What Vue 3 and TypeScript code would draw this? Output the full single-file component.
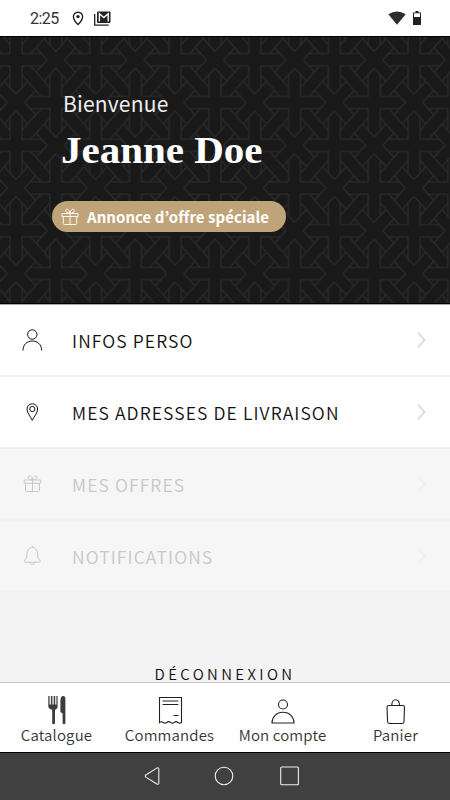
<script setup lang="ts">
interface MenuItem {
  label: string
  icon: 'user' | 'pin' | 'gift' | 'bell'
  disabled: boolean
}

interface Tab {
  label: string
  icon: 'cutlery' | 'receipt' | 'account' | 'bag'
}

const menu: MenuItem[] = [
  { label: 'INFOS PERSO', icon: 'user', disabled: false },
  { label: 'MES ADRESSES DE LIVRAISON', icon: 'pin', disabled: false },
  { label: 'MES OFFRES', icon: 'gift', disabled: true },
  { label: 'NOTIFICATIONS', icon: 'bell', disabled: true },
]

const tabs: Tab[] = [
  { label: 'Catalogue', icon: 'cutlery' },
  { label: 'Commandes', icon: 'receipt' },
  { label: 'Mon compte', icon: 'account' },
  { label: 'Panier', icon: 'bag' },
]

// The four mirrored quadrants of one pattern tile.
const quadrants: string[] = ['', 'translate(79.6 0) scale(-1 1)', 'translate(0 85.5) scale(1 -1)', 'translate(79.6 85.5) scale(-1 -1)']
</script>

<template>
  <div class="screen">
    <header class="status">
      <span class="time">2:25</span>
      <svg class="status-pin" viewBox="0 0 12 15" width="12" height="15">
        <path d="M6 1.2C3.2 1.2 1.4 3.2 1.4 5.7 1.4 9 6 13.6 6 13.6S10.600 9 10.600 5.700C10.600 3.200 8.800 1.200 6 1.200Z" fill="none" stroke="#222" stroke-width="1.4" />
        <circle cx="6" cy="5.600" r="1.700" fill="#222" />
      </svg>
      <svg class="status-mail" viewBox="0 0 17 15" width="17" height="15">
        <path d="M.7 3v11.200h14" fill="none" stroke="#222" stroke-width="1.300" />
        <rect x="3" y="0.500" width="13.500" height="11.500" rx="1" fill="#222" />
        <path d="M5.400 10.500V2.800l4.400 3.800 4.400-3.800v7.700" fill="none" stroke="#fff" stroke-width="1.400" />
      </svg>
      <span class="grow"></span>
      <svg class="wifi" viewBox="0 0 18 14" width="18" height="14">
        <path d="M.3 3.200Q9-2.200 17.700 3.200L9 13.800Z" fill="#2d2d2d" />
      </svg>
      <svg class="battery" viewBox="0 0 8 14" width="8" height="14">
        <path d="M2.500 0h3v1.500H8V14H0V1.500h2.500Z" fill="#222" />
        <rect x="1" y="2.300" width="6" height="3.700" fill="#fff" />
      </svg>
    </header>

    <section class="hero">
      <svg class="weave" width="450" height="267">
        <defs>
          <g id="quadrant" fill="none" stroke="#2a2a2a" stroke-width="1.300">
            <path d="M0 34.200L6 28V6H25.600L31.300 0M8.500 42.750L14.100 36.750H33.800V14.700L39.800 8.500" />
            <path d="M6 15L25.300 36.750M14.500 6L33.800 27.750" />
            <path d="M25.600 6L19.900 12.400M6 28L11.800 21.200M14.100 36.750L19.900 30.300M33.800 14.700L28 21.500" />
          </g>
          <pattern id="weave" x="16" y="22.800" width="79.600" height="85.500" patternUnits="userSpaceOnUse">
            <use v-for="q in quadrants" :key="q" href="#quadrant" :transform="q" />
          </pattern>
        </defs>
        <rect width="450" height="267" fill="#191919" />
        <rect width="450" height="267" fill="url(#weave)" />
      </svg>
      <div class="hero-content">
        <p class="welcome">Bienvenue</p>
        <h1 class="name">Jeanne Doe</h1>
        <div class="offer">
          <svg viewBox="0 0 18 18" width="18" height="18" fill="none" stroke="#fff7e8" stroke-width="1">
            <path d="M1 5.500h16v3H1ZM2.300 8.500V15.500q0 1 1 1H14.700q1 0 1-1V8.500M9 5.500v11M9 5.300C7 5.300 4.500 4.300 4.500 2.600 4.500.6 8 .2 9 5.300M9 5.300C11 5.300 13.500 4.300 13.500 2.600 13.500.6 10 .2 9 5.300" />
          </svg>
          <span>Annonce d’offre spéciale</span>
        </div>
      </div>
    </section>

    <nav class="menu">
      <a v-for="item in menu" :key="item.label" class="item" :class="{ disabled: item.disabled }">
        <svg class="item-icon" viewBox="0 0 22 24" width="22" height="24" fill="none" stroke="currentColor">
          <g v-if="item.icon === 'user'">
            <circle cx="11.300" cy="6.500" r="4.700" />
            <path d="M2 22.500C2 16.500 6 13 11.300 13S20.600 16.500 20.600 22.500" />
          </g>
          <g v-else-if="item.icon === 'pin'">
            <path d="M11.300 20.300C9.800 17 6 13 6 9 6 6 8.300 3.800 11.300 3.800S16.600 6 16.600 9C16.600 13 12.800 17 11.300 20.300Z" />
            <circle cx="11.300" cy="9" r="2.600" />
          </g>
          <g v-else-if="item.icon === 'gift'">
            <path d="M3.300 8h16.400v3.200H3.300ZM4.500 11.200v7q0 1.300 1.300 1.300h11.400q1.300 0 1.300-1.300v-7M11.500 8v11.500M11.500 7.800C9.500 7.800 7 7 7 5.300 7 3.300 10.500 2.800 11.500 7.800M11.500 7.800C13.500 7.800 16 7 16 5.300 16 3.300 12.500 2.800 11.500 7.800" />
          </g>
          <g v-else>
            <path d="M11.300 2V3C9.800 3.500 5.800 5.500 5.800 10V13C5.800 15 3.300 15.500 3.300 17.300 3.300 18 3.700 18.200 4.300 18.200H18.300C18.900 18.200 19.300 18 19.300 17.300 19.300 15.500 16.800 15 16.800 13V10C16.800 5.500 12.800 3.500 11.300 3M9 18.200C9 21.200 13.600 21.200 13.600 18.200" />
          </g>
        </svg>
        <span class="item-label">{{ item.label }}</span>
        <svg class="chevron" viewBox="0 0 9 16" width="9" height="16">
          <path d="M1 .7L7.600 8 1 15.300" fill="none" stroke="currentColor" stroke-width="1.200" />
        </svg>
      </a>
    </nav>

    <div class="logout">DÉCONNEXION</div>

    <nav class="tabs">
      <a v-for="tab in tabs" :key="tab.label" class="tab">
        <svg viewBox="0 0 26 30" width="26" height="30" fill="none" stroke="#222" stroke-width="1.100">
          <g v-if="tab.icon === 'cutlery'" fill="#3c3c3c" stroke="none">
            <path d="M4.300 1h1.300v8.500h1.300V1h1.500v8.500h1.300V1h1.500v8.500h1.200V1h1.200v10.500c0 1.800-1 2.700-2.600 3.200V28q0 1.200-1.400 1.200T8.200 28V14.700c-2.300-.5-3.900-1.600-3.900-3.700Z" />
            <path d="M21.400 28q0 1.200-1.400 1.200T18.600 28V18.500L16.400 17V6q0-5 2.800-5 2.200 0 2.200 3Z" />
          </g>
          <g v-else-if="tab.icon === 'receipt'">
            <path d="M2.500 27.500V2.500H24.500V27.500q-1.800 1.300-3.600 0q-1.800-1.800-3.700 0q-1.800 1.300-3.700 0q-1.800-1.800-3.700 0q-1.800 1.300-3.600 0q-1.900-1.600-3.700 0Z" />
            <path d="M5.500 6h15.800M5.500 9.500h15.800M16.500 20.500h5" />
          </g>
          <g v-else-if="tab.icon === 'account'">
            <circle cx="13" cy="9.500" r="4.500" />
            <path d="M2 28C2 22 6.500 17.200 13 17.200S24 22 24 28Z" />
          </g>
          <g v-else>
            <path d="M5.700 10.500H19.800Q21.500 10.500 21.500 12L21 26.700Q20.900 28.500 19.100 28.500H6.500Q4.700 28.500 4.600 26.700L4 12Q4 10.500 5.700 10.500Z" />
            <path d="M8.800 10.500C8.800 2.800 16.500 2.800 16.500 10.500" />
          </g>
        </svg>
        <span>{{ tab.label }}</span>
      </a>
    </nav>

    <footer class="system">
      <svg class="back" viewBox="0 0 20 20" width="20" height="20">
        <path d="M14.800 3.300V16.700Q14.800 19 12.800 17.900L2.200 11.400Q.2 10 2.200 8.700L12.800 2.100Q14.800 1 14.800 3.300Z" />
      </svg>
      <svg viewBox="0 0 20 20" width="20" height="20"><circle cx="10" cy="10" r="8.800" /></svg>
      <svg viewBox="0 0 20 20" width="20" height="20"><rect x="0.700" y="1" width="17.700" height="17.700" rx="1" /></svg>
    </footer>
  </div>
</template>

<style>
body {
  margin: 0;
}
</style>

<style scoped>
.screen {
  width: 450px;
  height: 800px;
  display: flex;
  flex-direction: column;
  overflow: hidden;
  background: #f3f3f3;
  color: #111;
  font-family: "Noto Sans CJK JP", "Noto Sans", sans-serif;
}

.status {
  box-sizing: border-box;
  height: 36px;
  flex: none;
  display: flex;
  align-items: center;
  padding: 0 29px 0 30px;
  background: #fff;
}
.time {
  width: 42px;
  padding-top: 1px;
  font: 400 16px/35px Roboto, sans-serif;
  letter-spacing: -0.500px;
  color: #333;
}
.status-pin {
  margin-right: 10px;
}
.grow {
  flex: 1;
}
.wifi {
  margin-right: 7px;
}

.hero {
  box-sizing: border-box;
  height: 268px;
  flex: none;
  display: grid;
  border-top: 1px solid #000;
  border-bottom: 1px solid #000;
  overflow: hidden;
}
.weave,
.hero-content {
  grid-area: 1 / 1;
}
.hero-content {
  display: flex;
  flex-direction: column;
  align-items: flex-start;
  padding: 49px 0 0 52px;
  color: #fff;
}
.welcome {
  margin: 0 0 0 11px;
  font-size: 21px;
  line-height: 34px;
  letter-spacing: 0.200px;
  color: #eee;
}
.name {
  margin: 6px 0 0 9px;
  font: 700 38.500px/48px "Liberation Serif", serif;
  transform: scaleX(1.065);
  transform-origin: left;
}
.offer {
  box-sizing: border-box;
  width: 234px;
  height: 31px;
  margin-top: 27px;
  display: flex;
  align-items: center;
  gap: 8px;
  padding-left: 9px;
  border-radius: 15.500px;
  background: #c0a479;
  font-size: 15px;
  font-weight: 700;
  line-height: 31px;
  letter-spacing: 0.050px;
  white-space: nowrap;
}

.menu {
  border-top: 1px solid #aaa;
}
.item {
  box-sizing: border-box;
  height: 72px;
  display: flex;
  align-items: center;
  padding: 0 24px 0 21px;
  background: #fff;
  border-bottom: 2px solid #efefef;
}
.item.disabled {
  background: #f6f6f6;
  border-bottom-color: #f3f3f3;
  color: #c8c8c8;
}
.item-icon {
  margin-right: 29px;
}
.item-label {
  flex: 1;
  font-size: 17.500px;
  font-weight: 350;
  letter-spacing: 1.110px;
}
.chevron {
  color: #ccc;
}
.disabled .chevron {
  color: #ececec;
}

.logout {
  flex: 1;
  display: flex;
  align-items: flex-end;
  justify-content: center;
  font-size: 15px;
  font-weight: 350;
  line-height: 17px;
  letter-spacing: 3.350px;
}

.tabs {
  box-sizing: border-box;
  height: 70px;
  flex: none;
  display: grid;
  grid-template-columns: repeat(4, 113px);
  border-top: 1px solid #c4c4c4;
  background: #fff;
}
.tab {
  display: flex;
  flex-direction: column;
  align-items: center;
  padding-top: 12px;
  font-size: 15px;
  font-weight: 350;
  line-height: 20px;
  letter-spacing: 0.150px;
  color: #333;
  white-space: nowrap;
}

.system {
  box-sizing: border-box;
  height: 48px;
  flex: none;
  display: flex;
  justify-content: center;
  align-items: center;
  gap: 46px;
  padding: 0 3px 2px 0;
  border-top: 1px solid #000;
  background: #404040;
}
.system svg {
  fill: none;
  stroke: #eee;
  stroke-width: 1.100;
}
.system .back {
  margin: 0 4px 0 -4px;
}
</style>
